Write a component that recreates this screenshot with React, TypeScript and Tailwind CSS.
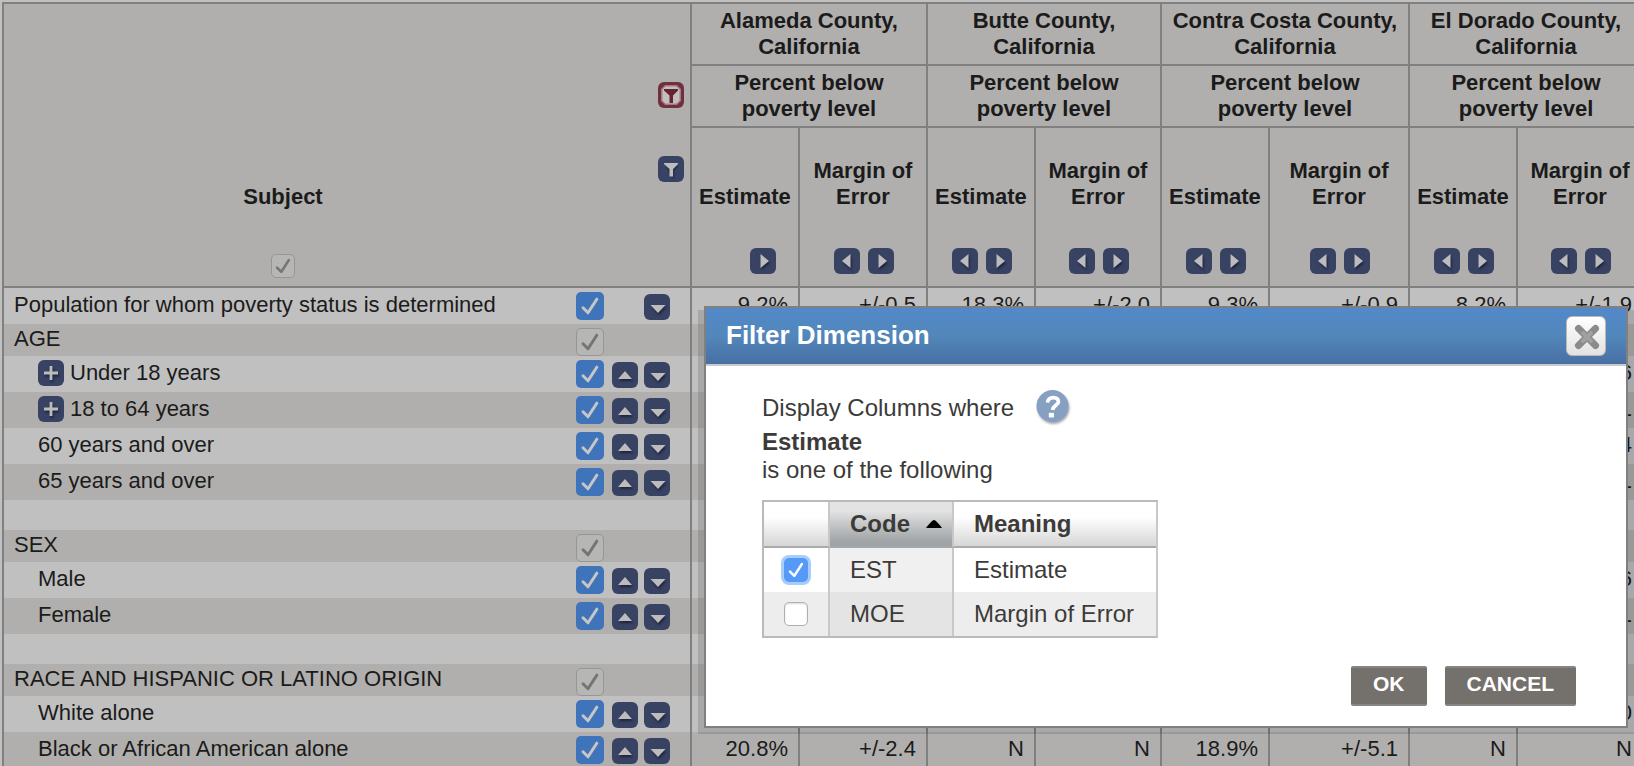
import type { ReactNode } from 'react';

type ArrowKind = 'left' | 'right' | 'up' | 'down' | 'plus';

const shapes: Record<ArrowKind, string> = {
  left: 'M8 13 L16.5 6 V20 Z',
  right: 'M19 13 L10.5 6 V20 Z',
  up: 'M13 9 L20 17 H6 Z',
  down: 'M14 19 L21.5 11 H6.5 Z',
  plus: 'M11.6 6 H14.4 V11.6 H20 V14.4 H14.4 V20 H11.6 V14.4 H6 V11.6 H11.6 Z',
};

function IconButton({ kind, label }: { kind: ArrowKind; label: string }) {
  return (
    <button type="button" aria-label={label} className="block size-[26px] shrink-0 rounded-md bg-[#384263]">
      <svg viewBox="0 0 26 26" className="size-[26px] [filter:drop-shadow(1px_2px_1px_rgba(20,24,45,0.75))]" aria-hidden="true">
        <path d={shapes[kind]} fill="#bcbcbc" />
      </svg>
    </button>
  );
}

function FilterButton({ active }: { active?: boolean }) {
  return (
    <button type="button" aria-label={active ? 'Edit filter' : 'Add filter'} className="block size-[26px]">
      <svg viewBox="0 0 26 26" className="size-[26px]" aria-hidden="true">
        {active ? (
          <>
            <rect width="26" height="26" rx="6" fill="#70303d" />
            <path d="M7 3 H19 L23 7 V19 L19 23 H7 L3 19 V7 Z" fill="#a07a82" />
            <path d="M7.500 4.500 H18.500 L21.500 7.500 V18.500 L18.500 21.500 H7.500 L4.500 18.500 V7.500 Z" fill="#c3bfc0" />
            <path d="M6 7 H20 V8.500 L15 13.500 V21 H11.500 V13.500 L6 8.500 Z" fill="#66242f" />
          </>
        ) : (
          <>
            <rect width="26" height="26" rx="6" fill="#384263" />
            <path d="M8 10 H21 L16.500 14.500 V23 L13 22 Z" fill="#252c49" opacity="0.7" />
            <path d="M6 7 H20 V8 L15 13 V20.500 H11.500 V13 L6 8 Z" fill="#bdbdc0" />
          </>
        )}
      </svg>
    </button>
  );
}

function Check({
  id,
  label,
  tone,
  checked = true,
}: {
  id: string;
  label?: string;
  tone: 'blue' | 'gray' | 'header' | 'focus' | 'empty';
  checked?: boolean;
}) {
  const box = {
    blue: 'size-7 rounded-[5px] bg-[#4074ba]',
    gray: 'size-7 rounded-[5px] border border-[#969695] bg-[#b6b6b4]',
    header: 'size-6 rounded-[5px] border border-[#969695] bg-[#b6b6b4]',
    focus: 'size-6 rounded-[5px] bg-[#559af6] shadow-[0_0_0_3px_#a9cdfb]',
    empty: 'size-6 rounded-[5px] border border-[#b0b0b0] bg-white shadow-[inset_0_1px_2px_#d8d8d8]',
  }[tone];
  const mark = {
    blue: 'size-7 stroke-[#c6c6c6]',
    gray: 'size-7 stroke-[#757575]',
    header: 'size-6 stroke-[#757575]',
    focus: 'size-6 stroke-white',
    empty: 'size-6',
  }[tone];
  return (
    <span className="grid shrink-0 place-items-center">
      <input
        id={id}
        type="checkbox"
        defaultChecked={checked}
        aria-label={label}
        className={`col-start-1 row-start-1 m-0 appearance-none outline-none ${box}`}
      />
      {checked && (
        <svg viewBox="0 0 28 28" className={`pointer-events-none col-start-1 row-start-1 ${mark}`} aria-hidden="true">
          <path d="M7 15.800 L12 20.800 L20.800 7.200" fill="none" strokeWidth="3" strokeLinecap="round" strokeLinejoin="round" />
        </svg>
      )}
    </span>
  );
}

const counties = ['Alameda County,', 'Butte County,', 'Contra Costa County,', 'El Dorado County,'];

type Row = {
  kind: 'item' | 'section' | 'blank';
  text?: string;
  level?: 0 | 1;
  expandable?: boolean;
  first?: boolean;
  values?: string[];
};

const last = (digit: string) => ['', '', '', '', '', '', '', digit];

const rows: Row[] = [
  {
    kind: 'item',
    text: 'Population for whom poverty status is determined',
    level: 0,
    first: true,
    values: ['9.2%', '+/-0.5', '18.3%', '+/-2.0', '9.3%', '+/-0.9', '8.2%', '+/-1.9'],
  },
  { kind: 'section', text: 'AGE' },
  { kind: 'item', text: 'Under 18 years', level: 1, expandable: true, values: last('6') },
  { kind: 'item', text: '18 to 64 years', level: 1, expandable: true, values: last('1') },
  { kind: 'item', text: '60 years and over', level: 1, values: last('4') },
  { kind: 'item', text: '65 years and over', level: 1, values: last('1') },
  { kind: 'blank' },
  { kind: 'section', text: 'SEX' },
  { kind: 'item', text: 'Male', level: 1, values: last('6') },
  { kind: 'item', text: 'Female', level: 1, values: last('1') },
  { kind: 'blank' },
  { kind: 'section', text: 'RACE AND HISPANIC OR LATINO ORIGIN' },
  { kind: 'item', text: 'White alone', level: 1, values: last('0') },
  {
    kind: 'item',
    text: 'Black or African American alone',
    level: 1,
    values: ['20.8%', '+/-2.4', 'N', 'N', '18.9%', '+/-5.1', 'N', 'N'],
  },
];

const line = 'border-[#808080]';

function HeadCell({ children, first }: { children: ReactNode; first?: boolean }) {
  return (
    <th scope="col" className={`h-40 border-r-2 border-b-2 p-0 pb-3 align-bottom ${line}`}>
      <div>{children}</div>
      <div className="mt-[38px] flex justify-center gap-2 pl-0.5">
        {first ? <span className="size-[26px]" /> : <IconButton kind="left" label="Move column left" />}
        <IconButton kind="right" label="Move column right" />
      </div>
    </th>
  );
}

function DataTable() {
  return (
    <div className="-mr-2.5 ml-0.5 pt-0.5">
      <table className={`w-full table-fixed border-separate border-spacing-0 border-t-2 border-l-2 text-[22px] leading-[26px] text-[#1b1b1b] ${line}`}>
        <colgroup>
          <col />
          <col className="w-[108px]" />
          <col className="w-32" />
          <col className="w-[108px]" />
          <col className="w-[126px]" />
          <col className="w-[108px]" />
          <col className="w-[140px]" />
          <col className="w-[108px]" />
          <col className="w-[126px]" />
        </colgroup>
        <thead className="bg-[#b0afad]">
          <tr>
            <th scope="col" rowSpan={3} className={`border-r-2 border-b-2 p-0 align-bottom ${line}`}>
              <div className="flex h-[282px]">
                <div className="flex flex-1 flex-col items-center justify-end gap-11 pb-2">
                  <label htmlFor="all-rows">Subject</label>
                  <Check id="all-rows" tone="header" />
                </div>
                <div className="flex w-32 flex-col items-end gap-12 pt-[78px] pr-1.5">
                  <FilterButton active />
                  <FilterButton />
                </div>
              </div>
            </th>
            {counties.map((c) => (
              <th key={c} scope="colgroup" colSpan={2} className={`h-[62px] border-r-2 border-b-2 p-0 ${line}`}>
                {c}
                <br />
                California
              </th>
            ))}
          </tr>
          <tr>
            {counties.map((c) => (
              <th key={c} scope="colgroup" colSpan={2} className={`h-[62px] border-r-2 border-b-2 p-0 ${line}`}>
                Percent below
                <br />
                poverty level
              </th>
            ))}
          </tr>
          <tr>
            {counties.flatMap((c, i) => [
              <HeadCell key={`${c}-est`} first={i === 0}>
                Estimate
              </HeadCell>,
              <HeadCell key={`${c}-moe`}>
                Margin of
                <br />
                Error
              </HeadCell>,
            ])}
          </tr>
        </thead>
        <tbody>
          {rows.map((row, i) => {
            const height = row.kind === 'item' ? 'h-9' : row.kind === 'section' ? 'h-8' : 'h-[30px]';
            const pad = row.kind === 'item' ? 'pt-1' : 'pt-0.5';
            return (
              <tr key={i} className={`${height} ${i % 2 ? 'bg-[#b0afad]' : 'bg-[#c0c0c0]'}`}>
                <th scope="row" className={`border-r-2 p-0 text-left align-top font-normal ${line}`}>
                  {row.kind !== 'blank' && (
                    <div className={`flex items-start pr-5 ${height} ${row.level === 1 ? 'pl-[34px]' : 'pl-2.5'}`}>
                      {row.expandable && (
                        <span className="mt-1 mr-1.5">
                          <IconButton kind="plus" label={`Expand ${row.text}`} />
                        </span>
                      )}
                      <label htmlFor={`row-${i}`} className={`flex-1 ${pad}`}>
                        {row.text}
                      </label>
                      <span className="mt-1">
                        <Check id={`row-${i}`} tone={row.kind === 'section' ? 'gray' : 'blue'} />
                      </span>
                      <span className="mt-1.5 ml-2 flex w-[58px] justify-end gap-1.5">
                        {row.kind === 'item' && !row.first && <IconButton kind="up" label="Move row up" />}
                        {row.kind === 'item' && <IconButton kind="down" label="Move row down" />}
                      </span>
                    </div>
                  )}
                </th>
                {counties.flatMap((c, k) =>
                  [0, 1].map((n) => (
                    <td key={`${c}${n}`} className={`border-r-2 px-0 pr-2.5 pb-0 text-right align-top ${pad} ${line}`}>
                      {row.values?.[k * 2 + n]}
                    </td>
                  )),
                )}
              </tr>
            );
          })}
        </tbody>
      </table>
    </div>
  );
}

function CloseButton() {
  return (
    <button
      type="button"
      aria-label="Close"
      className="grid size-10 place-items-center rounded-md border border-[#b9b9b9] bg-linear-to-b from-white to-[#e2e2e2]"
    >
      <svg viewBox="0 0 40 40" className="size-10" aria-hidden="true">
        <path d="M11.500 11.500 L28.500 28.500 M28.500 11.500 L11.500 28.500" stroke="#8b8b8b" strokeWidth="7" strokeLinecap="round" />
        <path d="M16 16 L24 24 M24 16 L16 24" stroke="#a0a0a0" strokeWidth="4" strokeLinecap="round" />
      </svg>
    </button>
  );
}

function HelpButton() {
  return (
    <button type="button" aria-label="Help" className="block size-[34px]">
      <svg viewBox="0 0 34 34" className="size-[34px] [filter:drop-shadow(1px_2px_1px_rgba(70,80,95,0.5))]" aria-hidden="true">
        <circle cx="16.500" cy="16" r="16" fill="#86a0c2" />
        <path
          d="M11.500 12.500 C12 8.800 14.500 7.600 17.300 7.600 C20.500 7.600 22.800 9.200 22.400 12 C22 15.200 17 15.600 16.600 20"
          fill="none"
          stroke="#fff"
          strokeWidth="3.800"
        />
        <rect x="12.800" y="22.800" width="5.200" height="4.800" rx="0.800" fill="#fff" />
      </svg>
    </button>
  );
}

function DialogButton({ children }: { children: ReactNode }) {
  return (
    <button
      type="button"
      className="h-10 rounded-[2px] border-y-2 border-[#858583] bg-[#74706b] px-[22px] pb-1 text-[21px] leading-8 font-bold text-white"
    >
      {children}
    </button>
  );
}

const codes = [
  { code: 'EST', meaning: 'Estimate', on: true },
  { code: 'MOE', meaning: 'Margin of Error', on: false },
];

function FilterDialog() {
  return (
    <div className="absolute top-[306px] right-1.5 left-[704px]">
      <div className="absolute -inset-x-1.5 top-1 -bottom-1.5 bg-black/12" />
      <section role="dialog" aria-labelledby="dialog-title" className="relative border-2 border-[#808080] bg-white text-2xl leading-7 text-[#3c3b39]">
        <header className="flex h-[58px] items-center justify-between border-b-2 border-[#cacaca] bg-linear-to-b from-[#5289c9] via-[#5287ba] to-[#486fa4] px-5">
          <h2 id="dialog-title" className="pb-0.5 text-[26px] leading-8 font-bold text-white">
            Filter Dimension
          </h2>
          <CloseButton />
        </header>
        <div className="pt-6 pr-[50px] pb-5 pl-14">
          <div className="mb-1 flex items-center gap-[22px]">
            <p className="pt-0.5">Display Columns where</p>
            <HelpButton />
          </div>
          <p className="font-bold">Estimate</p>
          <p>is one of the following</p>
          <table className="mt-4 border-separate border-spacing-0 border-2 border-[#bababa] border-r-[#c8c8c8]">
            <thead>
              <tr className="h-[46px] text-left">
                <td className="w-[66px] border-r-2 border-b-2 border-r-[#c8c8c8] border-b-[#aaaaaa] bg-linear-to-b from-white from-35% to-[#d6d6d6] p-0" />
                <th
                  scope="col"
                  aria-sort="ascending"
                  className="w-[124px] border-r-2 border-b-2 border-r-[#c8c8c8] border-b-[#a3a7a9] bg-linear-to-b from-[#e3e3e3] from-20% to-[#a0a4a6] to-90% py-0 pr-2.5 pl-5"
                >
                  <button type="button" className="flex w-full items-center justify-between font-bold">
                    Code
                    <svg viewBox="0 0 16 9" className="h-[9px] w-4" aria-hidden="true">
                      <path d="M8 0 C9.500 0 14 5 16 8 H0 C2 5 6.500 0 8 0 Z" fill="#000" />
                    </svg>
                  </button>
                </th>
                <th scope="col" className="w-[202px] border-b-2 border-[#aaaaaa] bg-linear-to-b from-white from-35% to-[#d6d6d6] py-0 pr-0 pl-5">
                  Meaning
                </th>
              </tr>
            </thead>
            <tbody>
              {codes.map(({ code, meaning, on }) => (
                <tr key={code} className={`h-11 ${on ? 'bg-white' : 'bg-[#ededed]'}`}>
                  <td className="border-r-2 border-[#c8c8c8] p-0">
                    <Check id={`code-${code}`} tone={on ? 'focus' : 'empty'} checked={on} />
                  </td>
                  <td className={`border-r-2 border-[#c8c8c8] py-0 pr-0 pl-5 ${on ? 'bg-[#f0f0f0]' : 'bg-[#e4e4e4]'}`}>
                    <label htmlFor={`code-${code}`}>{code}</label>
                  </td>
                  <td className="py-0 pr-0 pl-5">{meaning}</td>
                </tr>
              ))}
            </tbody>
          </table>
          <div className="mt-7 flex justify-end gap-[18px]">
            <DialogButton>OK</DialogButton>
            <DialogButton>CANCEL</DialogButton>
          </div>
        </div>
      </section>
    </div>
  );
}

export default function App() {
  return (
    <main className="relative h-screen overflow-hidden bg-[#c0c0c0] font-['Liberation_Sans',Arial,sans-serif]">
      <DataTable />
      <FilterDialog />
    </main>
  );
}
